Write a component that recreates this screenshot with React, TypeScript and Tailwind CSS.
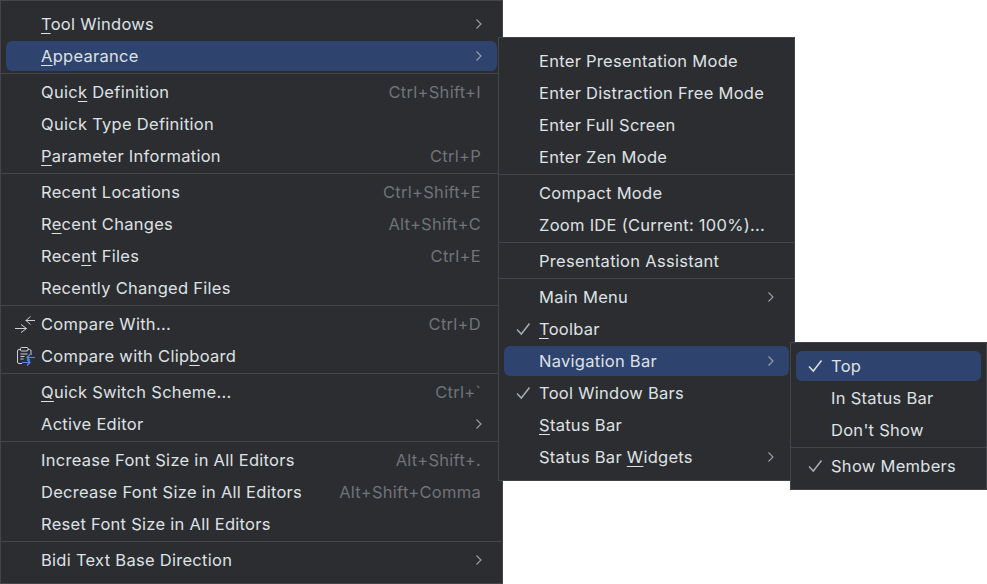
import React from "react";

type Item = {
  label?: React.ReactNode;
  hint?: string;
  arrow?: boolean;
  active?: boolean;
  check?: "light" | "dim";
  icon?: React.ReactNode;
  sep?: boolean;
};

const U = ({ children }: { children: React.ReactNode }) => (
  <span className="underline decoration-1 underline-offset-[3px]">{children}</span>
);

const Chevron = () => (
  <svg width="16" height="16" viewBox="0 0 16 16" fill="none" className="shrink-0">
    <path d="M5.500 3.500 10 8l-4.500 4.500" stroke="#9da0a8" strokeWidth="1.1" />
  </svg>
);

const Check = ({ tone }: { tone: "light" | "dim" }) => (
  <svg width="20" height="20" viewBox="0 0 20 20" fill="none">
    <path d="M4 10.500 8.300 15 16.500 4.500" stroke={tone === "light" ? "#dfe1e5" : "#a8adb5"} strokeWidth="1.5" />
  </svg>
);

const CompareIcon = () => (
  <svg width="22" height="18" viewBox="0 0 22 18" fill="none">
    <path d="M10.500 5.500H20M15.500 1.500l-4.500 4 4.500 4" stroke="#ced0d6" strokeWidth="1" />
    <path d="M0 13.500h11.500M6 9.500l5.500 4-5.500 4" stroke="#ced0d6" strokeWidth="1" />
  </svg>
);

const ClipIcon = () => (
  <svg width="20" height="20" viewBox="0 0 20 20" fill="none">
    <path d="M5.500 3.500H4a1.500 1.500 0 0 0-1.500 1.500v11A1.500 1.500 0 0 0 4 17.500h3M13 3.500h1.500A1.500 1.500 0 0 1 16 5v4" stroke="#ced0d6" strokeWidth="1" />
    <rect x="5.500" y="1.500" width="7.500" height="3.500" rx="1" stroke="#ced0d6" strokeWidth="1" />
    <path d="M5.500 8h7M5.500 10.500h4M5.500 13h3" stroke="#ced0d6" strokeWidth="1" />
    <path d="M20 11.500h-8M15 8.500l-3 3 3 3" stroke="#548af7" strokeWidth="1.200" />
    <path d="M7 16.500h8M12 13.500l3 3-3 3" stroke="#548af7" strokeWidth="1.200" />
  </svg>
);

const Row = ({ item }: { item: Item }) => (
  <div className="h-8 py-px px-[5px]">
    <div className={`h-[30px] flex items-center rounded-[6px] pl-[35px] relative ${item.active ? "bg-[#2e436e]" : ""}`}>
      {(item.icon || item.check) && (
        <span className="absolute left-[9px] top-0 h-full flex items-center">
          {item.icon ?? <Check tone={item.check!} />}
        </span>
      )}
      <span className="flex-1 whitespace-nowrap text-[#dfe1e5]">{item.label}</span>
      {item.hint && <span className="text-[#6f737a] whitespace-nowrap pr-4">{item.hint}</span>}
      {item.arrow && (
        <span className="pr-[10px]">
          <Chevron />
        </span>
      )}
    </div>
  </div>
);

const Sep = () => (
  <div className="h-1 flex items-start pt-px">
    <div className="h-px w-full bg-[#43454a]" />
  </div>
);

const List = ({ items }: { items: Item[] }) => (
  <>
    {items.map((it, i) => (it.sep ? <Sep key={i} /> : <Row key={i} item={it} />))}
  </>
);

const main: Item[] = [
  { label: <><U>T</U>ool Windows</>, arrow: true },
  { label: <><U>A</U>ppearance</>, arrow: true, active: true },
  { sep: true },
  { label: <>Quic<U>k</U> Definition</>, hint: "Ctrl+Shift+I" },
  { label: "Quick Type Definition" },
  { label: <><U>P</U>arameter Information</>, hint: "Ctrl+P" },
  { sep: true },
  { label: "Recent Locations", hint: "Ctrl+Shift+E" },
  { label: <>R<U>e</U>cent Changes</>, hint: "Alt+Shift+C" },
  { label: <>Rece<U>n</U>t Files</>, hint: "Ctrl+E" },
  { label: "Recently Changed Files" },
  { sep: true },
  { label: "Compare With...", hint: "Ctrl+D", icon: <CompareIcon /> },
  { label: <>Compare with Clip<U>b</U>oard</>, icon: <ClipIcon /> },
  { sep: true },
  { label: <><U>Q</U>uick Switch Scheme...</>, hint: "Ctrl+`" },
  { label: "Active Editor", arrow: true },
  { sep: true },
  { label: "Increase Font Size in All Editors", hint: "Alt+Shift+." },
  { label: "Decrease Font Size in All Editors", hint: "Alt+Shift+Comma" },
  { label: "Reset Font Size in All Editors" },
  { sep: true },
  { label: "Bidi Text Base Direction", arrow: true },
];

const appearance: Item[] = [
  { label: "Enter Presentation Mode" },
  { label: "Enter Distraction Free Mode" },
  { label: "Enter Full Screen" },
  { label: "Enter Zen Mode" },
  { sep: true },
  { label: "Compact Mode" },
  { label: "Zoom IDE (Current: 100%)..." },
  { sep: true },
  { label: "Presentation Assistant" },
  { sep: true },
  { label: "Main Menu", arrow: true },
  { label: <><U>T</U>oolbar</>, check: "dim" },
  { label: "Navigation Bar", arrow: true, active: true },
  { label: "Tool Window Bars", check: "dim" },
  { label: <><U>S</U>tatus Bar</> },
  { label: <>Status Bar <U>W</U>idgets</>, arrow: true },
];

const nav: Item[] = [
  { label: "Top", check: "light", active: true },
  { label: "In Status Bar" },
  { label: "Don't Show" },
  { sep: true },
  { label: "Show Members", check: "dim" },
];

export default function App() {
  return (
    <div className="relative w-[987px] h-[584px] overflow-hidden bg-white font-['Inter',sans-serif] text-[16.5px] tracking-[0.28px] leading-5">
      <div className="w-[503px] h-[584px] bg-[#2b2d30] border border-[#43454a] pt-[7px] box-border">
        <List items={main} />
      </div>
      <div className="absolute left-[498px] top-[37px] w-[297px] bg-[#2b2d30] border border-[#43454a] py-[7px]">
        <List items={appearance} />
      </div>
      <div className="absolute left-[790px] top-[342px] w-[197px] bg-[#2b2d30] border border-[#43454a] py-[7px]">
        <List items={nav} />
      </div>
    </div>
  );
}
